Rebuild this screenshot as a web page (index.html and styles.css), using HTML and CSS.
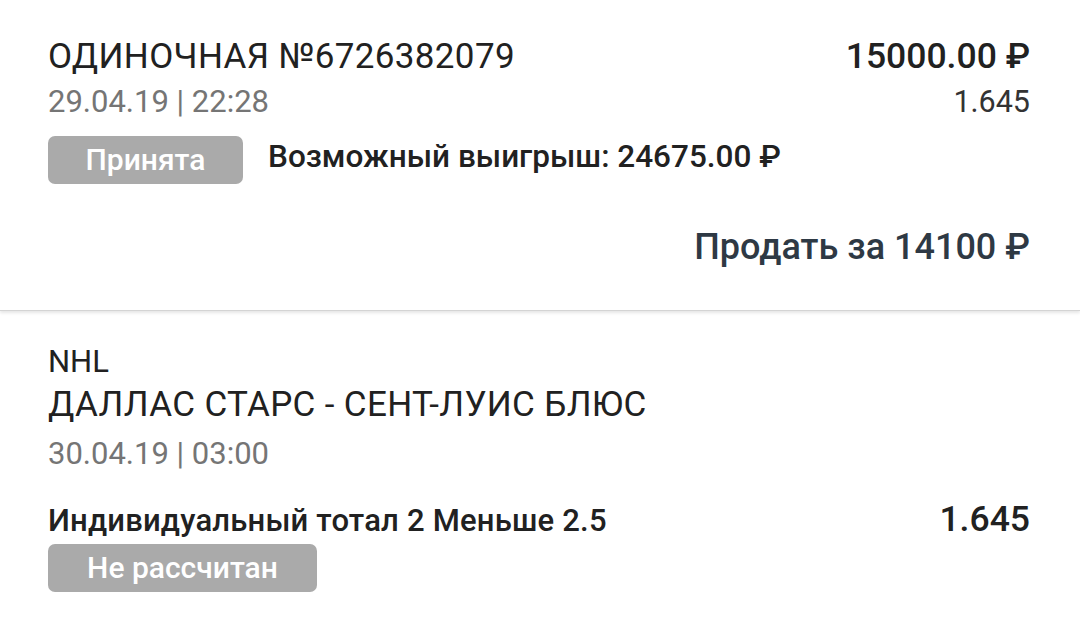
FILE: index.html
```html
<!DOCTYPE html>
<html lang="ru">
<head>
    <meta charset="UTF-8">
    <meta name="viewport" content="width=device-width, initial-scale=1.0">
    <title>Ставка №6726382079</title>
    <link rel="stylesheet" href="styles.css">
</head>
<body>

<section class="bet">
    <div class="row">
        <div class="bet-title">ОДИНОЧНАЯ №6726382079</div>
        <div class="bet-sum">15000.00 ₽</div>
    </div>
    <div class="row">
        <div class="date">29.04.19 | 22:28</div>
        <div class="coef">1.645</div>
    </div>
    <div class="row-left">
        <span class="badge">Принята</span>
        <span class="win">Возможный выигрыш: 24675.00 ₽</span>
    </div>
    <div class="sell">Продать за 14100 ₽</div>
</section>

<section class="event">
    <div class="league">NHL</div>
    <div class="teams">ДАЛЛАС СТАРС - СЕНТ-ЛУИС БЛЮС</div>
    <div class="date event-date">30.04.19 | 03:00</div>
    <div class="row outcome">
        <div class="outcome-name">Индивидуальный тотал 2 Меньше 2.5</div>
        <div class="outcome-coef">1.645</div>
    </div>
    <div class="badge badge-wide">Не рассчитан</div>
</section>

</body>
</html>
```

FILE: styles.css
```css
body {
    font-family: Roboto, "Noto Sans", Arial, sans-serif;
    margin: 0;
    padding: 0;
    background-color: #ffffff;
    color: #212121;
}
.bet {
    box-sizing: border-box;
    height: 311px;
    padding: 33px 50px 0 48px;
    border-bottom: 1px solid #d4d4d4;
    box-shadow: 0 2px 3px rgba(0, 0, 0, 0.1);
}
.row {
    display: flex;
    justify-content: space-between;
    align-items: baseline;
}
.row-left {
    display: flex;
    align-items: flex-start;
    gap: 25px;
    margin-top: 12px;
}
.bet-title, .teams {
    font-size: 35px;
    line-height: 46px;
    letter-spacing: 0.35px;
}
.bet-sum {
    font-size: 35.5px;
    line-height: 46px;
    font-weight: 500;
}
.date {
    font-size: 31px;
    line-height: 44px;
    color: #757575;
}
.coef {
    font-size: 30.5px;
    line-height: 44px;
    color: #333333;
}
.badge {
    display: inline-block;
    width: 195px;
    height: 48px;
    line-height: 48px;
    background-color: #aaaaaa;
    color: #ffffff;
    font-size: 30px;
    font-weight: 500;
    text-align: center;
    border-radius: 7px;
}
.win {
    font-size: 31.5px;
    line-height: 42px;
    font-weight: 500;
}
.sell {
    margin-top: 41px;
    text-align: right;
    font-size: 36px;
    line-height: 44px;
    font-weight: 500;
    color: #2e3944;
}
.event {
    padding: 31px 50px 0 48px;
}
.league {
    font-size: 31px;
    line-height: 40px;
}
.event-date {
    margin-top: 4px;
}
.outcome {
    margin-top: 21px;
}
.outcome-name {
    font-size: 31px;
    line-height: 44px;
    font-weight: 500;
    letter-spacing: 0.2px;
}
.outcome-coef {
    font-size: 35.5px;
    line-height: 44px;
    font-weight: 500;
}
.badge-wide {
    display: block;
    width: 269px;
    margin-top: 1px;
}
```
